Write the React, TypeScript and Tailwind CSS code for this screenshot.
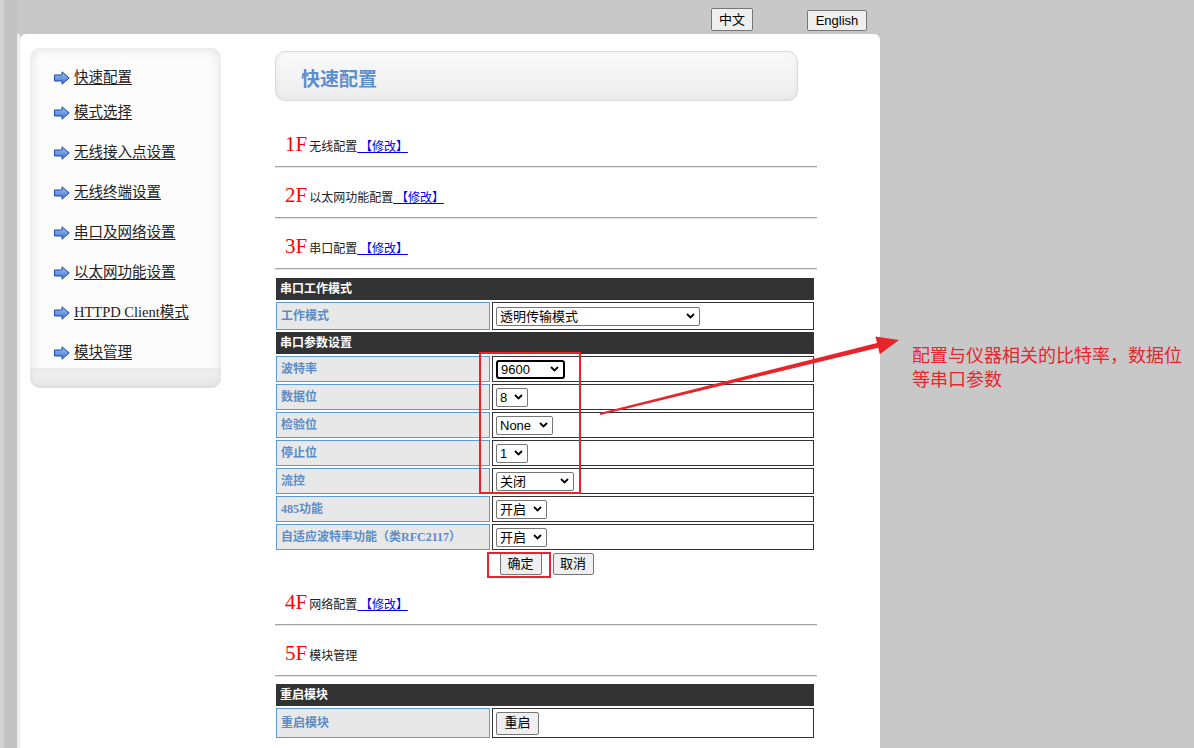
import React from "react";

const Arrow = () => (
  <svg width="16" height="14" viewBox="0 0 16 14" className="shrink-0">
    <defs>
      <linearGradient id="ag" x1="0" y1="0" x2="0" y2="1">
        <stop offset="0" stopColor="#9cc0f2" />
        <stop offset="1" stopColor="#3f72d4" />
      </linearGradient>
    </defs>
    <polygon points="0.5,4 8,4 8,0.8 15.2,7 8,13.2 8,10 0.5,10" fill="url(#ag)" stroke="#2148a8" strokeWidth="1" />
  </svg>
);

const Chevron = () => (
  <svg width="9" height="6" viewBox="0 0 9 6" className="shrink-0">
    <path d="M1 1l3.5 3.5L8 1" fill="none" stroke="#000" strokeWidth="1.8" />
  </svg>
);

const Sel = ({ cls, v, focus }: { cls: string; v: string; focus?: boolean }) => (
  <div
    className={`${cls} flex items-center justify-between h-[19px] bg-white pl-[3px] pr-[4px] text-[13px] leading-none text-black font-['Liberation_Sans','Noto_Sans_CJK_SC',sans-serif] ${
      focus ? "border-2 border-black rounded-[3px]" : "border border-[#767676] rounded-[2px]"
    }`}
  >
    <span>{v}</span>
    <Chevron />
  </div>
);

const Btn = ({ children, cls }: { children: React.ReactNode; cls: string }) => (
  <div
    className={`${cls} flex items-center justify-center bg-[#efefef] border border-[#767676] rounded-[2px] text-[13px] text-black font-['Liberation_Sans','Noto_Sans_CJK_SC',sans-serif]`}
  >
    {children}
  </div>
);

const Hr = () => <div className="h-[2px] border-t border-[#a3a3a3] bg-[#e4e4e4]" />;

const Section = ({ n, text, link }: { n: string; text: string; link?: boolean }) => (
  <div className="h-[49px] pt-[6px] pl-[10px] flex items-center">
    <span className="text-[21px] leading-none text-[#ff0000] font-['Liberation_Serif',serif]">{n}</span>
    <span className="ml-[2px] text-[12px] text-[#222] font-['Noto_Sans_CJK_SC',sans-serif] self-center mt-[3px]">
      {text}
      {link && <a className="text-[#0000ee] underline">&nbsp;【修改】</a>}
    </span>
  </div>
);

const Head = ({ t }: { t: string }) => (
  <div className="col-span-2 h-[22px] bg-[#333333] flex items-center pl-[4px] text-[12px] font-bold text-white">
    {t}
  </div>
);

const Row = ({ label, children, h }: { label: string; children: React.ReactNode; h: string }) => (
  <>
    <div className={`${h} bg-[#e8e8e8] border border-[#5e9ad6] flex items-center pl-[4px] text-[12px] font-bold text-[#5d8bc6]`}>
      {label}
    </div>
    <div className={`${h} bg-white border border-[#333] flex items-center pl-[3px]`}>{children}</div>
  </>
);

const menu = [
  "快速配置",
  "模式选择",
  "无线接入点设置",
  "无线终端设置",
  "串口及网络设置",
  "以太网功能设置",
  "HTTPD Client模式",
  "模块管理",
];

export default function App() {
  return (
    <div className="relative w-[1194px] h-[748px] overflow-hidden bg-[#c8c8c8] font-['Liberation_Serif','Noto_Sans_CJK_SC',serif]">
      <div className="flex h-full">
        <div className="w-[4px] bg-[#d2d2d2]" />
        <div className="w-[13px] bg-[#c2c2c2]" />
        <div className="w-[863px] flex flex-col">
          <div className="h-[34px] flex items-start justify-end pr-[13px] gap-[54px]">
            <Btn cls="mt-[8px] w-[42px] h-[23px]">中文</Btn>
            <Btn cls="mt-[10px] w-[60px] h-[21px]">English</Btn>
          </div>
          <div className="flex-1 flex">
            <div className="w-[3px] bg-[#eeeeee]" />
            <div className="flex-1 bg-white rounded-tl-[6px] rounded-tr-[6px] pl-[10px] pt-[14px] flex items-start">
              {/* Sidebar */}
              <div className="w-[191px] h-[340px] rounded-[10px] bg-[#fcfcfc] shadow-[inset_0_0_12px_rgba(0,0,0,0.13)] flex flex-col overflow-hidden">
                <div className="pl-[24px] pt-[20px] flex flex-col">
                  {menu.map((m, i) => (
                    <a
                      key={m}
                      className={`flex items-center h-[20px] ${i === 0 ? "" : i === 1 ? "mt-[15px]" : "mt-[20px]"}`}
                    >
                      <Arrow />
                      <span className="ml-[4px] text-[14.5px] text-[#222] underline underline-offset-[2px]">{m}</span>
                    </a>
                  ))}
                </div>
                <div className="mt-[5px] h-[20px] bg-[linear-gradient(to_bottom,#f2f2f2,#e6e6e6)] shadow-[inset_0_0_8px_rgba(0,0,0,0.08)]" />
              </div>

              {/* Content */}
              <div className="ml-[54px] mt-[3px] w-[542px] flex flex-col">
                <div className="w-[523px] h-[50px] rounded-[10px] border border-[#d9d9d9] bg-[linear-gradient(to_bottom,#fafafa,#ededed)] shadow-[inset_0_0_6px_rgba(0,0,0,0.06)] flex items-center pl-[25px] pt-[4px]">
                  <span className="text-[19px] font-bold text-[#5b8fcf] font-['Noto_Sans_CJK_SC',sans-serif]">快速配置</span>
                </div>

                <div className="mt-[16px]" />
                <Section n="1F" text="无线配置" link />
                <Hr />
                <Section n="2F" text="以太网功能配置" link />
                <Hr />
                <Section n="3F" text="串口配置" link />
                <Hr />

                <div className="mt-[8px] ml-[1px] w-[538px] grid grid-cols-[214px_1fr] gap-x-[2px] gap-y-[2px]">
                  <Head t="串口工作模式" />
                  <Row label="工作模式" h="h-[28px]">
                    <Sel cls="w-[204px]" v="透明传输模式" />
                  </Row>
                  <Head t="串口参数设置" />
                  <Row label="波特率" h="h-[26px]">
                    <Sel cls="w-[69px]" v="9600" focus />
                  </Row>
                  <Row label="数据位" h="h-[26px]">
                    <Sel cls="w-[32px]" v="8" />
                  </Row>
                  <Row label="检验位" h="h-[26px]">
                    <Sel cls="w-[57px]" v="None" />
                  </Row>
                  <Row label="停止位" h="h-[26px]">
                    <Sel cls="w-[32px]" v="1" />
                  </Row>
                  <Row label="流控" h="h-[26px]">
                    <Sel cls="w-[78px]" v="关闭" />
                  </Row>
                  <Row label="485功能" h="h-[26px]">
                    <Sel cls="w-[51px]" v="开启" />
                  </Row>
                  <Row label="自适应波特率功能（类RFC2117）" h="h-[26px]">
                    <Sel cls="w-[51px]" v="开启" />
                  </Row>
                </div>

                <div className="ml-[1px] w-[538px] mt-[3px] flex justify-center gap-[11px] pl-[3px]">
                  <Btn cls="w-[42px] h-[22px]">确定</Btn>
                  <Btn cls="w-[41px] h-[22px]">取消</Btn>
                </div>

                <Section n="4F" text="网络配置" link />
                <Hr />
                <Section n="5F" text="模块管理" />
                <Hr />

                <div className="mt-[7px] ml-[1px] w-[538px] grid grid-cols-[214px_1fr] gap-x-[2px] gap-y-[2px]">
                  <Head t="重启模块" />
                  <Row label="重启模块" h="h-[30px]">
                    <Btn cls="w-[43px] h-[23px]">重启</Btn>
                  </Row>
                </div>
              </div>
            </div>
          </div>
        </div>
      </div>

      {/* Annotation overlay */}
      <svg className="absolute left-0 top-0 pointer-events-none" width="1194" height="748" viewBox="0 0 1194 748">
        <rect x="480" y="353" width="100" height="140" fill="none" stroke="#e8232a" strokeWidth="2" />
        <rect x="488" y="553" width="62" height="24" fill="none" stroke="#e8232a" strokeWidth="2" />
        <polygon
          points="599.8,413 877,342.9 875.4,336.4 899,340 879.8,354.2 878.2,347.7 600.2,415"
          fill="#e8232a"
        />
      </svg>
      <div className="absolute left-[912px] top-[342px] text-[18px] leading-[24px] text-[#e8262d] font-['Noto_Sans_CJK_SC',sans-serif]">
        配置与仪器相关的比特率，数据位
        <br />
        等串口参数
      </div>
    </div>
  );
}
